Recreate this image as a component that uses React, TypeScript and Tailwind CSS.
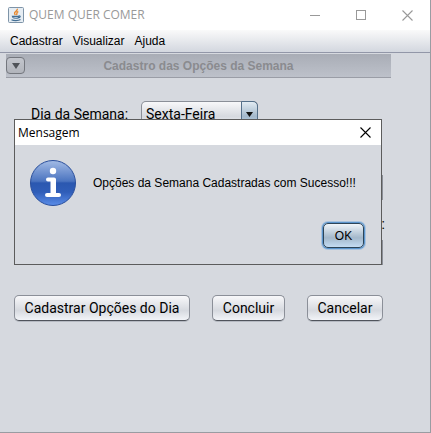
import React from "react";

const glossy =
  "h-[26px] shrink-0 whitespace-nowrap rounded-[5px] border border-[#8b8f98] border-b-[#50545c] bg-linear-to-b from-[#f8f8fa] via-[#d6d9df] via-60% to-[#f2f4f8] font-[Roboto,sans-serif] text-sm leading-6 text-black shadow-[0_1px_0_#b6bac2]";

function JavaIcon() {
  return (
    <svg width="16" height="16" viewBox="0 0 16 16" aria-hidden="true">
      <rect x=".5" y=".5" width="15" height="15" rx="1" fill="#e6edf3" stroke="#7e94a8" />
      <path d="M9.300 1.800C10 4 4.500 5 7.400 8M10.300 4.500C7.600 5.500 9.800 6.400 8.400 8" fill="none" stroke="#e8892f" strokeWidth="1.400" />
      <path d="M4.500 9.300h6v1.200c0 1-5 1-5.500 0zM10.500 9c2.500-.6 2 1.600-.3 1.800M3.500 12.700c2 1.200 7 1.200 9-.2" fill="none" stroke="#446f94" strokeWidth="1.200" />
    </svg>
  );
}

function InfoIcon() {
  return (
    <svg width="48" height="48" viewBox="0 0 48 48" className="shrink-0" aria-hidden="true">
      <defs>
        <linearGradient id="ball" x1="0" y1="0" x2="0" y2="1">
          <stop offset="0" stopColor="#a3bbe5" />
          <stop offset=".46" stopColor="#4b74c0" />
          <stop offset=".5" stopColor="#2b58b0" />
          <stop offset=".7" stopColor="#2f5db8" />
          <stop offset="1" stopColor="#5b8de8" />
        </linearGradient>
      </defs>
      <circle cx="24" cy="24" r="22.500" fill="url(#ball)" stroke="#2a4f9c" />
      <circle cx="24" cy="12" r="3.200" fill="#fff" />
      <path d="M19 20.500h6v15.500M18 36h12" fill="none" stroke="#fff" strokeWidth="4" strokeLinecap="round" strokeLinejoin="round" />
      <path d="M21.500 20h5.500v16h-5.500z" fill="#fff" />
    </svg>
  );
}

function Cross() {
  return (
    <svg width="11" height="11" viewBox="0 0 11 11" aria-hidden="true">
      <path d="M.5.5l10 10M10.500.5l-10 10" stroke="currentColor" strokeWidth="1.100" />
    </svg>
  );
}

function TitleBar() {
  return (
    <header className="flex h-[30px] items-center bg-white pl-2 text-[#999]">
      <JavaIcon />
      <h1 className="ml-[5px] font-['Open_Sans',sans-serif] text-xs">QUEM QUER COMER</h1>
      <div className="ml-auto flex">
        <button type="button" aria-label="–" className="flex h-[30px] w-[46px] items-center justify-center">
          <span className="h-px w-[10px] bg-[#999]" />
        </button>
        <button type="button" aria-label="□" className="flex h-[30px] w-[46px] items-center justify-center">
          <span className="size-[10px] border border-[#999]" />
        </button>
        <button type="button" aria-label="×" className="flex h-[30px] w-[46px] items-center justify-center">
          <Cross />
        </button>
      </div>
    </header>
  );
}

function MessageDialog() {
  return (
    <section
      role="dialog"
      aria-labelledby="dialog-title"
      className="absolute top-[119px] right-12 left-[14px] border border-[#5c5c5c] bg-[#d6d9df]"
    >
      <div className="flex h-[25px] items-center justify-between bg-white pr-[10px] pl-[3px]">
        <h2 id="dialog-title" className="font-['Open_Sans',sans-serif] text-xs">Mensagem</h2>
        <button type="button" aria-label="×">
          <Cross />
        </button>
      </div>
      <div className="flex items-center gap-4 pt-[14px] pl-[14px]">
        <InfoIcon />
        <p className="text-xs whitespace-nowrap">Opções da Semana Cadastradas com Sucesso!!!</p>
      </div>
      <div className="flex justify-end px-[17px] py-4">
        <button
          type="button"
          className="h-[25px] w-[41px] rounded-[5px] border border-[#2d4558] bg-linear-to-b from-[#f0f5f9] via-[#a3b8cb] via-60% to-[#c4dcf3] text-xs shadow-[0_0_0_1px_#5b94cc,0_0_0_2px_#a9c3de]"
        >
          OK
        </button>
      </div>
    </section>
  );
}

export default function App() {
  return (
    <div className="relative flex min-h-screen flex-col border-r border-b border-[#999ca2] bg-[#d6d9df] font-['Liberation_Sans',sans-serif] text-black">
      <TitleBar />
      <nav className="flex h-[23px] items-center gap-[10px] border-b border-[#9297a8] bg-linear-to-b from-[#fafafa] to-[#d3d7df] pl-[10px] text-xs">
        <button type="button">Cadastrar</button>
        <button type="button">Visualizar</button>
        <button type="button">Ajuda</button>
      </nav>
      <div className="mt-px mr-[39px] ml-[6px] flex h-6 items-center border-b border-[#9a9da6] bg-linear-to-b from-[#a9adb6] to-[#bdc1ca] pr-[19px]">
        <button
          type="button"
          aria-label="▼"
          className="flex h-[17px] w-[19px] items-center justify-center rounded-[4px] border border-[#74777e] bg-linear-to-b from-[#c3c6cd] to-[#b1b4bb]"
        >
          <svg width="8" height="6" viewBox="0 0 8 6" aria-hidden="true">
            <path d="M0 0h8L4 6z" fill="#505359" />
          </svg>
        </button>
        <h2 className="flex-1 text-center text-xs font-bold text-[#8a8b8f]">Cadastro das Opções da Semana</h2>
      </div>
      <main className="pr-[45px] pl-[14px]">
        <div className="mt-[23px] flex items-center pl-[17px]">
          <label htmlFor="day" className="w-[110px] font-[Roboto,sans-serif] text-sm">Dia da Semana:</label>
          <div className="relative">
            <select id="day" className={glossy + " w-[117px] appearance-none pl-1"}>
              <option>Sexta-Feira</option>
            </select>
            <span className="pointer-events-none absolute inset-y-0 right-0 flex w-[17px] items-center justify-center rounded-r-[5px] border border-[#55708a] bg-linear-to-b from-[#e3ecf3] via-[#a3b8cb] via-60% to-[#c4dcf3]">
              <svg width="7" height="5" viewBox="0 0 7 5" aria-hidden="true">
                <path d="M0 0h7L3.500 5z" fill="#111" />
              </svg>
            </span>
          </div>
        </div>
        <div className="mt-12 flex flex-col items-end">
          <input type="text" aria-labelledby="colon" className="mr-[2px] h-[25px] w-[118px] border border-[#8b8f98] bg-[#d6d9df]" />
          <span id="colon" className="flex h-10 items-center pt-2 font-[Roboto,sans-serif] text-sm">:</span>
          <input type="text" aria-labelledby="colon" className="mr-[2px] h-[25px] w-[118px] border border-[#8b8f98] bg-[#d6d9df]" />
        </div>
        <div className="mt-[30px] flex gap-[22px]">
          <button type="button" className={glossy + " w-44"}>Cadastrar Opções do Dia</button>
          <button type="button" className={glossy + " w-[73px]"}>Concluir</button>
          <button type="button" className={glossy + " w-[76px]"}>Cancelar</button>
        </div>
      </main>
      <MessageDialog />
    </div>
  );
}
